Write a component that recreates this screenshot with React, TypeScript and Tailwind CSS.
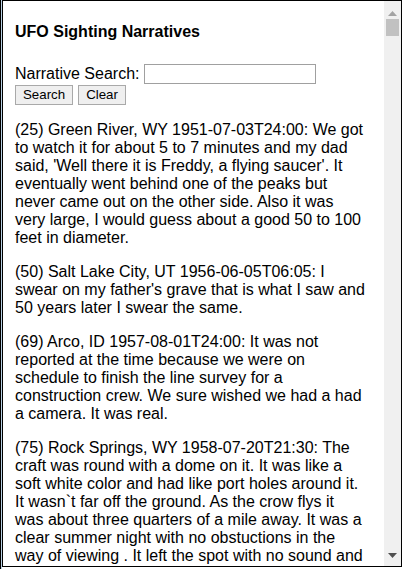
const narratives = [
  "(25) Green River, WY 1951-07-03T24:00: We got to watch it for about 5 to 7 minutes and my dad said, 'Well there it is Freddy, a flying saucer'. It eventually went behind one of the peaks but never came out on the other side. Also it was very large, I would guess about a good 50 to 100 feet in diameter.",
  "(50) Salt Lake City, UT 1956-06-05T06:05: I swear on my father's grave that is what I saw and 50 years later I swear the same.",
  "(69) Arco, ID 1957-08-01T24:00: It was not reported at the time because we were on schedule to finish the line survey for a construction crew. We sure wished we had a had a camera. It was real.",
  "(75) Rock Springs, WY 1958-07-20T21:30: The craft was round with a dome on it. It was like a soft white color and had like port holes around it. It wasn`t far off the ground. As the crow flys it was about three quarters of a mile away. It was a clear summer night with no obstuctions in the way of viewing . It left the spot with no sound and went straight up into the sky very fast.",
];

export default function App() {
  return (
    <div className="w-[405px] h-[569px] bg-white flex border-l border-black font-['Liberation_Sans',Arial,sans-serif] text-black">
      <div className="w-px bg-[#b9d1e4]" />
      <div className="w-[400px] h-[567px] border border-black flex overflow-hidden">
        {/* narratives pane */}
        <div className="flex-1 overflow-hidden pl-3 pr-3 pt-[22px]">
          <h4 className="text-[16px] leading-[18px] font-bold">UFO Sighting Narratives</h4>
          <div className="mt-[23px] text-[16px] leading-[18px] flex items-center">
            <span>Narrative Search:</span>
            <input className="ml-1 w-[172px] h-[20px] border border-[#a0a0a0] outline-none" />
          </div>
          <div className="flex gap-[5px] mt-px">
            <button className="h-[20px] px-[7px] text-[13.3px] leading-[16px] bg-[#efefef] border border-[#a9a9a9]">Search</button>
            <button className="h-[20px] px-[7px] text-[13.3px] leading-[16px] bg-[#efefef] border border-[#a9a9a9]">Clear</button>
          </div>
          <div className="w-[350px] text-[16px] leading-[18px]">
            {narratives.map((n, i) => (
              <p key={i} className="mt-4">{n}</p>
            ))}
          </div>
        </div>
        {/* scrollbar */}
        <div className="w-[17px] bg-[#f0f0f0] flex flex-col items-center">
          <svg width="9" height="5" viewBox="0 0 9 5" className="mt-[10px]">
            <polygon points="0,5 4.5,0 9,5" fill="#a3a3a3" />
          </svg>
          <div className="w-[13px] h-[17px] bg-[#c1c1c1] mt-[3px]" />
          <div className="flex-1" />
          <svg width="9" height="5" viewBox="0 0 9 5" className="mb-[8px]">
            <polygon points="0,0 9,0 4.5,5" fill="#505050" />
          </svg>
        </div>
      </div>
    </div>
  );
}
